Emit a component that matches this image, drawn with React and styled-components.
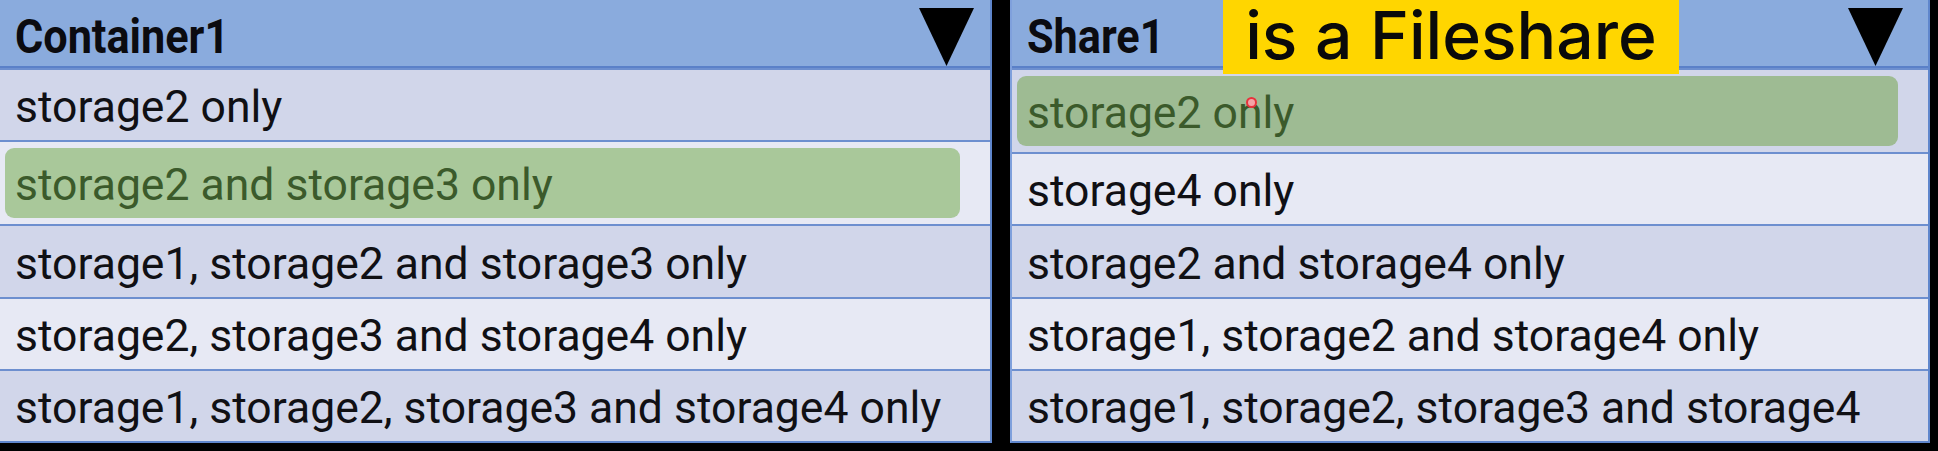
import React from 'react';
import styled, { createGlobalStyle } from 'styled-components';

const GlobalStyle = createGlobalStyle`
  html, body {
    margin: 0;
    padding: 0;
    background: #000;
  }
  body {
    width: 1938px;
    height: 451px;
    overflow: hidden;
    font-family: Roboto, "Liberation Sans", sans-serif;
  }
`;

const Screen = styled.div`
  display: flex;
  align-items: flex-start;
  gap: 18px;
  width: 1938px;
  height: 451px;
  background: #000;
`;

const Panel = styled.div`
  position: relative;
  display: flex;
  flex-direction: column;
  width: ${(p) => p.$width}px;
  height: 443px;
  box-sizing: border-box;
  border-left: ${(p) => (p.$edgeLeft ? '2px solid #7fa0dc' : 'none')};
  border-right: 2px solid #5f86cc;
  border-bottom: 2px solid #5f86cc;
  background: #d1d6ea;
`;

const Header = styled.div`
  display: flex;
  align-items: center;
  justify-content: space-between;
  height: 68px;
  flex: none;
  padding: 6px ${(p) => p.$arrowPad}px 0 ${(p) => p.$pad}px;
  box-sizing: border-box;
  background: #8aabdd;
  border-bottom: 2px solid #5a80c8;
`;

const HeaderTitle = styled.span`
  display: inline-block;
  font-family: Roboto, "Liberation Sans", sans-serif;
  font-weight: 700;
  font-size: 48px;
  color: #0b0b10;
  transform: scaleX(0.9);
  transform-origin: left center;
`;

const Arrow = styled.svg`
  width: 55px;
  height: 58px;
  align-self: flex-start;
  margin-top: 2px;
`;

const Row = styled.div`
  flex: 1;
  display: flex;
  align-items: stretch;
  box-sizing: border-box;
  border-top: 2px solid #6d8fcf;
  background: ${(p) => (p.$light ? '#e7e9f4' : '#d1d6ea')};
  padding: ${(p) => (p.$selected ? '6px 30px 6px 5px' : '0')};
`;

const RowText = styled.div`
  flex: 1;
  display: flex;
  align-items: center;
  padding: 4px 0 0 ${(p) => p.$pad}px;
  font-family: Roboto, "Liberation Sans", sans-serif;
  font-size: 44.5px;
  color: #101014;
  white-space: nowrap;
  overflow: hidden;
`;

const Selected = styled.div`
  flex: 1;
  display: flex;
  align-items: center;
  padding: 4px 0 0 ${(p) => p.$pad}px;
  border-radius: 9px;
  background: ${(p) => p.$tone};
  font-family: Roboto, "Liberation Sans", sans-serif;
  font-size: 44.5px;
  color: #3b5a2b;
  white-space: nowrap;
`;

const Label = styled.div`
  position: absolute;
  top: 0;
  left: 211px;
  width: 456px;
  height: 74px;
  display: flex;
  align-items: center;
  justify-content: center;
  background: #ffd600;
  font-family: Inter, "Open Sans", "Liberation Sans", sans-serif;
  font-weight: 500;
  font-size: 66px;
  line-height: 1;
  color: #0a0a0a;
  padding-bottom: 4px;
  box-sizing: border-box;
  z-index: 2;
`;

const Cursor = styled.span`
  position: absolute;
  left: 229px;
  top: 21px;
  width: 7px;
  height: 7px;
  border-radius: 50%;
  border: 2px solid #e8323c;
  background: #f4a3a6;
`;

const RowWrap = styled.div`
  position: relative;
  flex: 1;
  display: flex;
`;

const DownArrow = () => (
  <Arrow viewBox="0 0 55 58">
    <polygon points="0,0 55,0 27.5,58" fill="#000" />
  </Arrow>
);

const leftRows = [
  'storage2 only',
  'storage2 and storage3 only',
  'storage1, storage2 and storage3 only',
  'storage2, storage3 and storage4 only',
  'storage1, storage2, storage3 and storage4 only',
];

const rightRows = [
  'storage2 only',
  'storage4 only',
  'storage2 and storage4 only',
  'storage1, storage2 and storage4 only',
  'storage1, storage2, storage3 and storage4',
];

const List = ({ rows, selected, tone, pad, cursor }) =>
  rows.map((text, i) => (
    <Row key={text} $light={i % 2 === 1} $selected={i === selected}>
      {i === selected ? (
        <RowWrap>
          <Selected $tone={tone} $pad={pad - 5}>{text}</Selected>
          {cursor && <Cursor />}
        </RowWrap>
      ) : (
        <RowText $pad={pad}>{text}</RowText>
      )}
    </Row>
  ));

export default function App() {
  return (
    <>
      <GlobalStyle />
      <Screen>
        <Panel $width={992}>
          <Header $pad={15} $arrowPad={16}>
            <HeaderTitle>Container1</HeaderTitle>
            <DownArrow />
          </Header>
          <List rows={leftRows} selected={1} tone="#a9c89a" pad={15} />
        </Panel>
        <Panel $width={920} $edgeLeft>
          <Header $pad={15} $arrowPad={25}>
            <HeaderTitle>Share1</HeaderTitle>
            <DownArrow />
          </Header>
          <Label>is a Fileshare</Label>
          <List rows={rightRows} selected={0} tone="#9ebb93" pad={15} cursor />
        </Panel>
      </Screen>
    </>
  );
}
